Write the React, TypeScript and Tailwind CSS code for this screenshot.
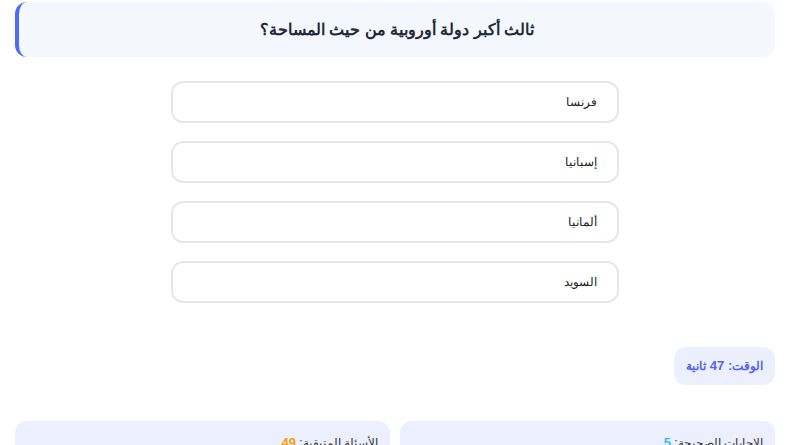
import React from "react";

const options = ["فرنسا", "إسبانيا", "ألمانيا", "السويد"];

export default function App() {
  return (
    <div
      dir="rtl"
      className="min-h-screen bg-white pl-[15px] pr-[13px] pt-[2px]"
      style={{ fontFamily: '"Liberation Sans", Arial, sans-serif' }}
    >
      <div className="flex h-[55px] items-center justify-center rounded-xl border-l-4 border-[#4a6cf7] bg-[#f4f7fe]">
        <h2 className="text-[15.5px] font-bold text-[#1f2937]">
          ثالث أكبر دولة أوروبية من حيث المساحة؟
        </h2>
      </div>

      <div className="mx-auto mt-[24px] flex w-[448px] flex-col gap-[18px]">
        {options.map((o) => (
          <button
            key={o}
            className="flex h-[42px] items-center rounded-xl border-2 border-[#e5e7eb] bg-white pr-[20px] text-right text-[12px] text-[#222]"
          >
            {o}
          </button>
        ))}
      </div>

      <div className="mt-[44px] flex">
        <div className="flex h-[38px] w-[101px] items-center justify-center rounded-xl bg-[#eceffd] text-[12px] font-bold text-[#5564e8]">
          الوقت: <span className="mx-1 text-[13px]">47</span> ثانية
        </div>
      </div>

      <div className="mt-[36px] grid grid-cols-2 gap-[10px]">
        <div className="h-[60px] rounded-xl bg-[#eceffd] px-3 pt-[12px] text-[12px] text-[#333]">
          الإجابات الصحيحة: <span className="text-[13px] font-bold text-[#38bdf8]">5</span>
        </div>
        <div className="h-[60px] rounded-xl bg-[#eceffd] px-3 pt-[12px] text-[12px] text-[#333]">
          الأسئلة المتبقية: <span className="text-[13px] font-bold text-[#f59e0b]">49</span>
        </div>
      </div>
    </div>
  );
}
